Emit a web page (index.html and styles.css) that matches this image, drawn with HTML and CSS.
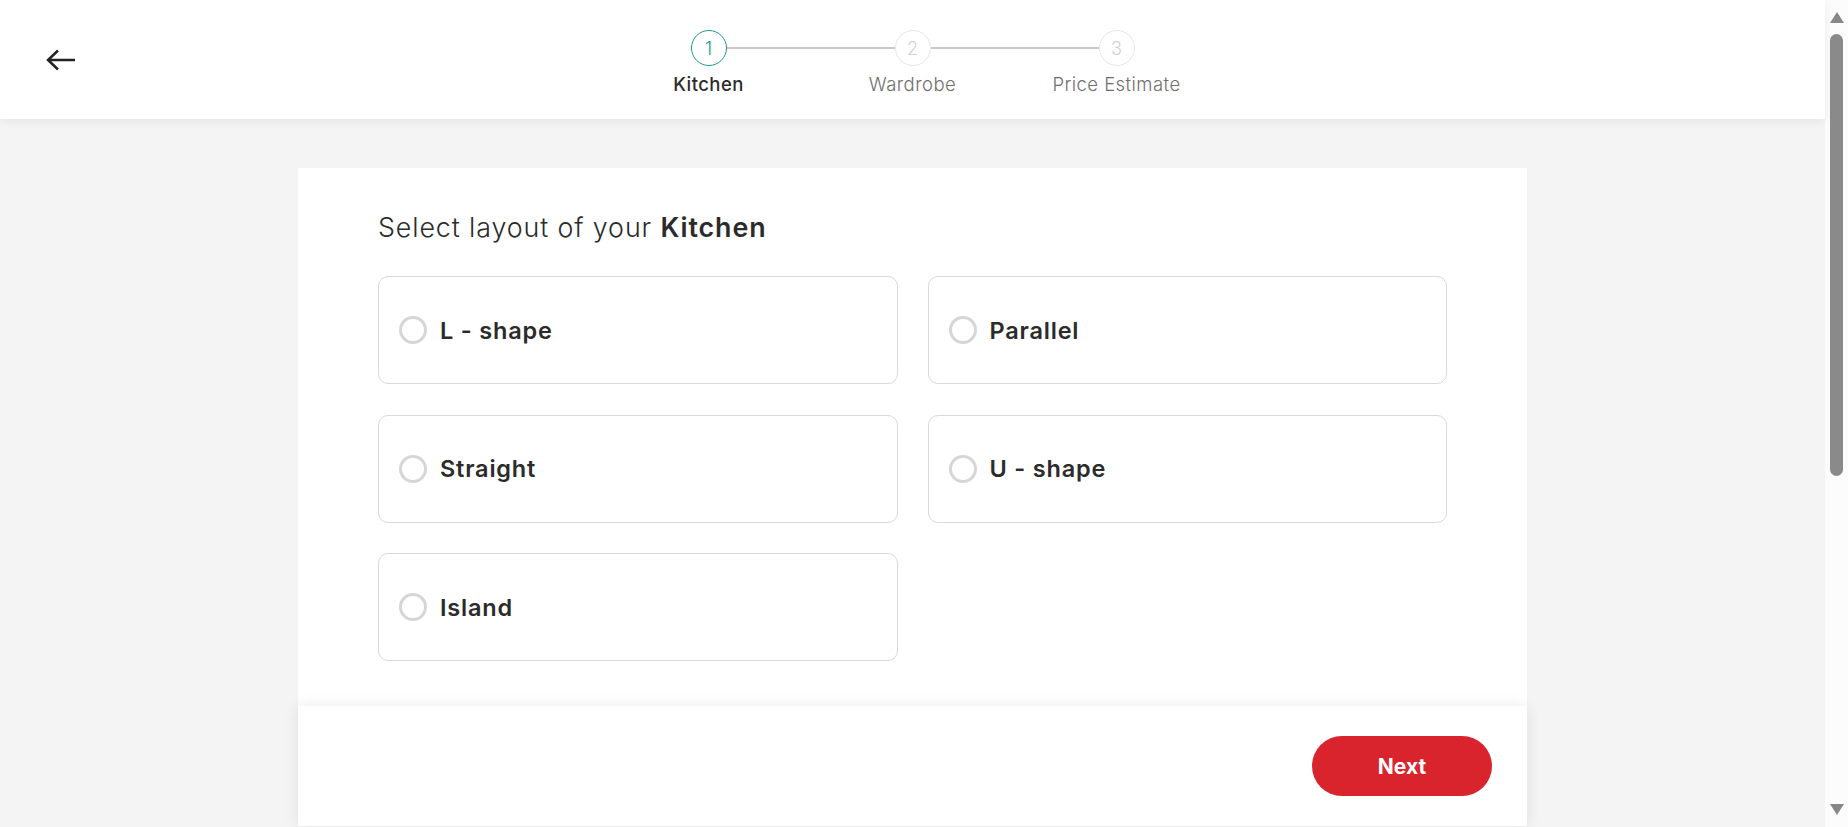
FILE: index.html
```html
<!DOCTYPE html>
<html lang="en">
<head>
<meta charset="utf-8">
<title>Kitchen layout</title>
<link rel="stylesheet" href="styles.css">
</head>
<body>
<div class="app">
  <div class="viewport">
    <header class="topbar">
      <div class="topbar-left">
        <button class="back-btn" aria-label="Back">
          <svg width="32" height="24" viewBox="0 0 32 24"><path d="M30 12H3M13 2.5L3 12l10 9.5" fill="none" stroke="#222" stroke-width="2.5"/></svg>
        </button>
      </div>
      <nav class="stepper">
        <div class="stepper-track">
          <span class="step-dot active">1</span>
          <span class="step-line"></span>
          <span class="step-dot">2</span>
          <span class="step-line"></span>
          <span class="step-dot">3</span>
        </div>
        <div class="stepper-labels">
          <span class="step-label active">Kitchen</span>
          <span class="step-label">Wardrobe</span>
          <span class="step-label">Price Estimate</span>
        </div>
      </nav>
      <div></div>
    </header>
    <main class="page">
      <section class="card">
        <div class="card-body">
          <h1 class="card-title">Select layout of your <strong>Kitchen</strong></h1>
          <div class="options">
            <label class="option"><span class="radio"></span><span class="option-label">L - shape</span></label>
            <label class="option"><span class="radio"></span><span class="option-label">Parallel</span></label>
            <label class="option"><span class="radio"></span><span class="option-label">Straight</span></label>
            <label class="option"><span class="radio"></span><span class="option-label">U - shape</span></label>
            <label class="option"><span class="radio"></span><span class="option-label">Island</span></label>
          </div>
        </div>
        <footer class="card-footer">
          <button class="next-btn">Next</button>
        </footer>
      </section>
    </main>
  </div>
  <div class="scrollbar" aria-hidden="true">
    <span class="sb-arrow up"></span>
    <span class="sb-thumb"></span>
    <span class="sb-space"></span>
    <span class="sb-arrow down"></span>
  </div>
</div>
</body>
</html>
```
FILE: styles.css
```css
* { box-sizing: border-box; }
html, body { margin: 0; background: #f4f4f4; }
body {
  font-family: "Inter", "Open Sans", sans-serif;
  color: #2b2b2b;
  overflow: hidden;
}
.app { display: flex; height: 827px; }
.viewport { flex: 1; min-width: 0; }

/* decorative scrollbar */
.scrollbar {
  width: 23px;
  height: 827px;
  background: #fcfcfc;
  display: flex;
  flex-direction: column;
  align-items: center;
  padding: 12px 0;
}
.sb-arrow { width: 0; height: 0; border-left: 7.5px solid transparent; border-right: 7.5px solid transparent; }
.sb-arrow.up { border-bottom: 11px solid #878787; }
.sb-arrow.down { border-top: 11px solid #878787; }
.sb-thumb { width: 13px; height: 442px; margin-top: 11px; background: #8a8a8a; border-radius: 7px; }
.sb-space { flex: 1; }

.topbar {
  height: 119px;
  background: #fff;
  box-shadow: 0 2px 10px rgba(0, 0, 0, 0.07);
  display: grid;
  grid-template-columns: 1fr auto 1fr;
  position: relative;
  z-index: 2;
}
.topbar-left { display: flex; align-items: center; padding-left: 45px; }
.back-btn { border: 0; background: none; padding: 0; display: flex; cursor: pointer; }

.stepper { padding-top: 30px; display: flex; flex-direction: column; align-items: center; }
.stepper-track { display: flex; align-items: center; }
.step-dot {
  width: 36px; height: 36px;
  border-radius: 50%;
  border: 1.5px solid #e6e6e6;
  display: flex; align-items: center; justify-content: center;
  font-size: 18px; font-weight: 300; color: #cfcfcf;
}
.step-dot.active { border-color: #1a9c8c; color: #1a9c8c; }
.step-line { width: 168px; height: 2px; background: #c9c9c9; }
.stepper-labels { display: flex; margin-top: 7px; }
.step-label {
  width: 204px; text-align: center;
  font-size: 18.5px; line-height: 22px; font-weight: 300; color: #6f6f6f;
  letter-spacing: 0.45px;
}
.step-label.active { font-weight: 500; color: #2b2b2b; }

.card {
  width: 1229px;
  margin: 49px auto 0;
  background: #fff;
}
.card-body { padding: 44px 80px 45px; }
.card-title {
  margin: 0;
  font-size: 26.8px; line-height: 31px; font-weight: 300; color: #2b2b2b;
  letter-spacing: 0.9px;
}
.card-title strong { font-weight: 600; }
.options {
  margin-top: 33px;
  display: grid;
  grid-template-columns: 1fr 1fr;
  column-gap: 30px;
  row-gap: 30.5px;
}
.option {
  height: 108px;
  border: 1px solid #d9d9d9;
  border-radius: 10px;
  display: flex;
  align-items: center;
  padding-left: 20px;
  gap: 13px;
  cursor: pointer;
}
.radio { width: 28px; height: 28px; border: 3px solid #d6d6d6; border-radius: 50%; flex: none; }
.option-label { font-size: 23.5px; font-weight: 600; color: #2b2b2b; letter-spacing: 0.8px; }

.card-footer {
  height: 120px;
  background: #fff;
  box-shadow: 0 0 14px rgba(0, 0, 0, 0.09);
  display: flex;
  justify-content: flex-end;
  align-items: flex-start;
  padding: 30px 35px 0;
  position: relative;
}
.next-btn {
  width: 180px; height: 60px;
  border: 0; border-radius: 30px;
  background: #d9232d; color: #fff;
  font-family: inherit; font-size: 21px; font-weight: 700;
  cursor: pointer;
}
```
